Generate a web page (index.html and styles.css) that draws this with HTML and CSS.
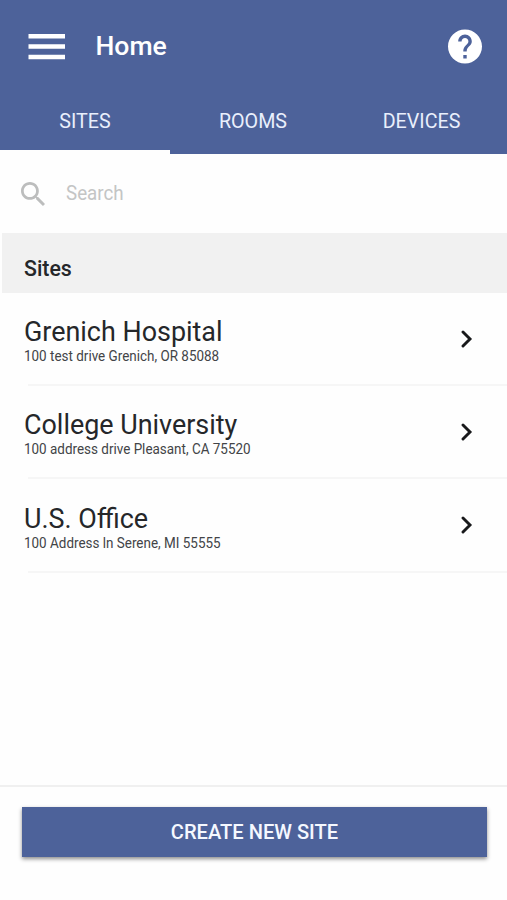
FILE: index.html
```html
<!DOCTYPE html>
<html lang="en">
<head>
<meta charset="utf-8">
<title>Home</title>
<link rel="stylesheet" href="styles.css">
</head>
<body>
<div class="app">
  <header class="header">
    <div class="toolbar">
      <svg class="menu" viewBox="0 0 38 26"><path d="M0.500 0h36.500v4.600H0.500zM0.500 10.300h36.500v4.400H0.500zM0.500 20.700h36.500v4.500H0.500z"/></svg>
      <h1 class="title"><span>Home</span></h1>
      <svg class="help" viewBox="2 2 20 20"><path d="M12 2C6.480 2 2 6.480 2 12s4.480 10 10 10 10-4.480 10-10S17.520 2 12 2zm1 17h-2v-2h2v2zm2.070-7.750l-.9.920C13.450 12.900 13 13.500 13 15h-2v-.5c0-1.100.45-2.100 1.170-2.830l1.240-1.260c.37-.36.590-.86.590-1.410 0-1.100-.9-2-2-2s-2 .9-2 2H8c0-2.210 1.790-4 4-4s4 1.790 4 4c0 .88-.36 1.680-.93 2.250z"/></svg>
    </div>
    <nav class="tabs">
      <a class="tab active"><span>SITES</span></a>
      <a class="tab"><span>ROOMS</span></a>
      <a class="tab"><span>DEVICES</span></a>
    </nav>
  </header>
  <div class="search">
    <svg class="search-icon" viewBox="3 3 17.490 17.490"><path d="M15.500 14h-.79l-.28-.27C15.410 12.590 16 11.110 16 9.500 16 5.910 13.090 3 9.500 3S3 5.910 3 9.500 5.910 16 9.500 16c1.610 0 3.090-.59 4.230-1.570l.27.28v.79l5 4.990L20.490 19l-4.990-5zm-6 0C7.010 14 5 11.990 5 9.500S7.010 5 9.500 5 14 7.010 14 9.500 11.990 14 9.500 14z"/></svg>
    <span class="placeholder">Search</span>
  </div>
  <h2 class="section"><span>Sites</span></h2>
  <main class="list">
    <div class="row">
      <div class="info"><div class="name"><span>Grenich Hospital</span></div><div class="address"><span>100 test drive Grenich, OR 85088</span></div></div>
      <svg class="chevron" viewBox="0 0 12 18"><path d="M2 2l7 7-7 7"/></svg>
    </div>
    <div class="row">
      <div class="info"><div class="name"><span>College University</span></div><div class="address"><span>100 address drive Pleasant, CA 75520</span></div></div>
      <svg class="chevron" viewBox="0 0 12 18"><path d="M2 2l7 7-7 7"/></svg>
    </div>
    <div class="row">
      <div class="info"><div class="name"><span>U.S. Office</span></div><div class="address"><span>100 Address ln Serene, MI 55555</span></div></div>
      <svg class="chevron" viewBox="0 0 12 18"><path d="M2 2l7 7-7 7"/></svg>
    </div>
  </main>
  <footer class="footer"><button class="create"><span>CREATE NEW SITE</span></button></footer>
</div>
</body>
</html>
```
FILE: styles.css
```css
* { box-sizing: border-box; }
body { margin: 0; background: #fefefe; color: #25272a; font-family: Roboto, "Liberation Sans", sans-serif; }
.app { display: flex; flex-direction: column; width: 507px; height: 900px; overflow: hidden; }
.header { display: flex; flex-direction: column; height: 154px; background: #4d629a; color: #fff; }
.toolbar { display: flex; align-items: center; height: 93px; padding: 0 25px 0 28px; }
.menu { width: 38px; height: 26px; fill: #fff; }
.title { flex: 1; margin: 0 0 2px 29.5px; font-size: 26.6px; font-weight: 500; line-height: 32px; }
.help { width: 34px; height: 35px; fill: #fff; }
.tabs { display: grid; grid-template-columns: 170px 166px 171px; flex: 1; }
.tab { padding-top: 17px; color: #e9effc; font-size: 19.7px; line-height: 24px; text-align: center; border-bottom: 4px solid transparent; }
.tab.active { border-bottom-color: #fefefe; }
.search { display: flex; align-items: center; height: 79px; padding-left: 21px; gap: 21px; color: #c4c5c5; font-size: 19.5px; }
.search-icon { width: 24px; height: 24px; fill: #bcbdbd; }
.placeholder { transform: scaleX(.962); transform-origin: left; }
.section { height: 60px; margin: 0 0 0 2px; padding: 23px 0 0 22px; background: #f1f1f1; font-size: 21.3px; font-weight: 500; line-height: 26px; }
.list { flex: 1; }
.row { display: flex; height: 93px; margin-left: 28px; border-bottom: 2px solid #f6f6f6; }
.row:last-child { height: 94px; }
.row:last-child .info { padding-top: 23px; }
.info { flex: 1; margin-left: -4px; padding-top: 22px; transform: scaleX(.961); transform-origin: left; }
.name { font-size: 28px; line-height: 33px; }
.address { color: #424447; font-size: 14px; line-height: 17px; }
.chevron { width: 12px; height: 18px; margin: 36.500px 34px 0 0; fill: none; stroke: #18191b; stroke-width: 2.9; stroke-linecap: round; }
.footer { height: 115px; padding: 20px 20px 0 22px; border-top: 2px solid #f0f0f0; }
.create { display: block; width: 100%; height: 50px; padding: 0; border: 0; background: #4d629a; color: #f5f8ff; font: 500 20.1px/50px Roboto, "Liberation Sans", sans-serif; box-shadow: 0 2px 4px rgba(0, 0, 0, .45); }
```
